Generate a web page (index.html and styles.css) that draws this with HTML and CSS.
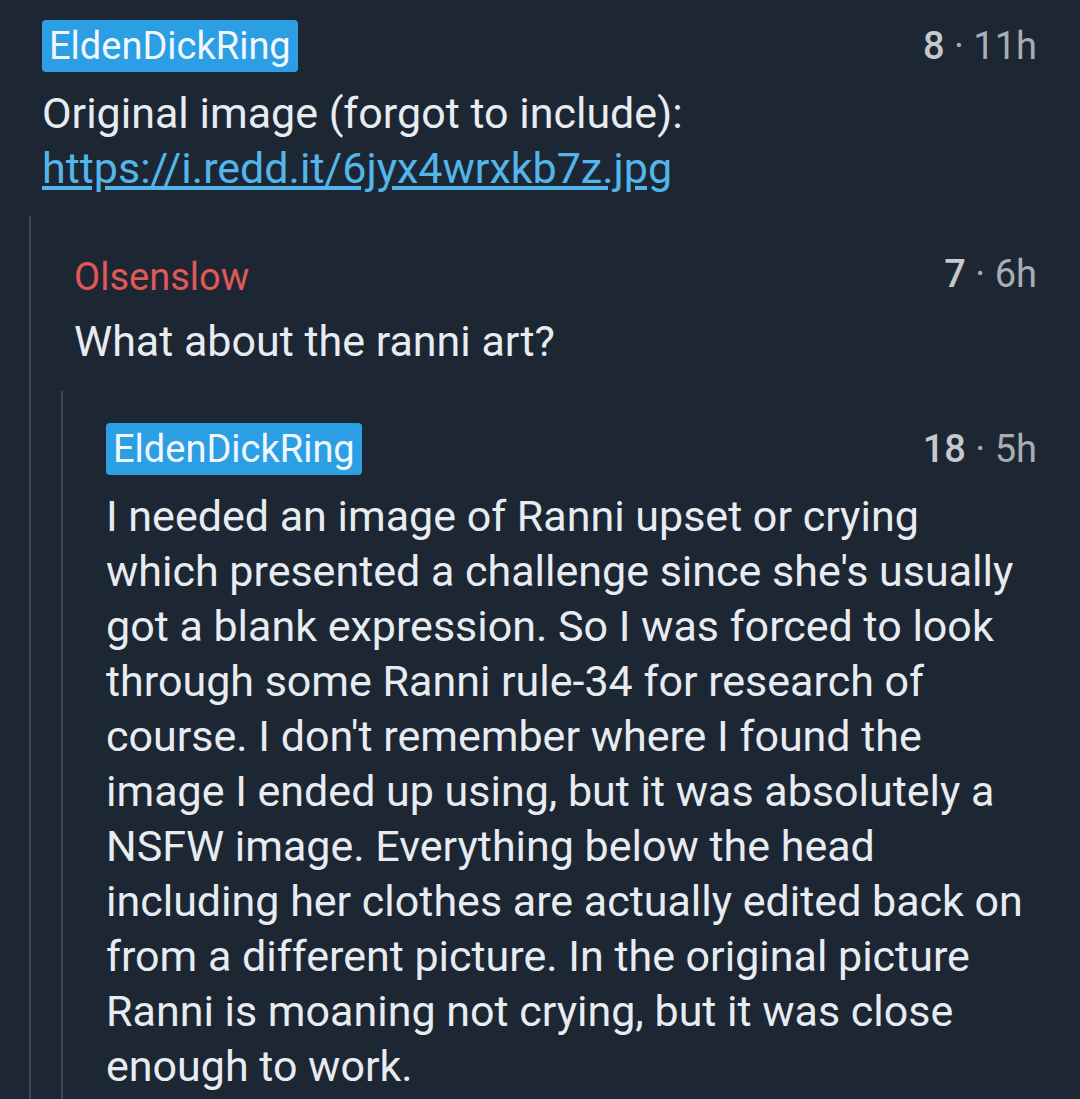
FILE: index.html
```html
<!DOCTYPE html>
<html>
<head>
  <meta charset="UTF-8">
  <title>Comments</title>
  <meta name="viewport" content="width=device-width, initial-scale=1.0">
  <link rel="stylesheet" href="styles.css">
</head>
<body>
  <div class="thread">
    <div class="comment">
      <div class="head">
        <span class="author op">EldenDickRing</span>
        <span class="meta"><b>8</b> · 11h</span>
      </div>
      <p class="body">Original image (forgot to include):<br><a href="#">https://i.redd.it/6jyx4wrxkb7z.jpg</a></p>

      <div class="replies">
        <div class="comment">
          <div class="head">
            <span class="author red">Olsenslow</span>
            <span class="meta"><b>7</b> · 6h</span>
          </div>
          <p class="body">What about the ranni art?</p>

          <div class="replies">
            <div class="comment">
              <div class="head">
                <span class="author op">EldenDickRing</span>
                <span class="meta"><b>18</b> · 5h</span>
              </div>
              <p class="body">I needed an image of Ranni upset or crying which presented a challenge since she's usually got a blank expression. So I was forced to look through some Ranni rule-34 for research of course. I don't remember where I found the image I ended up using, but it was absolutely a NSFW image. Everything below the head including her clothes are actually edited back on from a different picture. In the original picture Ranni is moaning not crying, but it was close enough to work.</p>
            </div>
          </div>
        </div>
      </div>
    </div>
  </div>
</body>
</html>
```

FILE: styles.css
```css
html, body { margin: 0; background: #1d2734; }
body { font-family: Roboto, "Noto Sans", sans-serif; color: #e8ecf1; }

.thread { padding: 20px 43px 0 42px; }

.head { display: flex; justify-content: space-between; align-items: center; height: 52px; }
.author { font-size: 38px; line-height: 52px; }
.author.op { background: #2c9ee4; color: #f0f8ff; padding: 0 7px; border-radius: 4px; }
.author.red { color: #e05858; padding-top: 6px; }

.meta { font-size: 38px; color: #a9aeb4; }
.meta b { font-weight: 500; color: #c5c8cc; }

.body { margin: 14px 0 0; font-size: 43px; line-height: 55px; }
.body a { color: #54b5ea; }

.replies {
  margin: 20px 0 0 -13px;
  border-left: 2px solid #394654;
  padding: 32px 0 0 43px;
}
.replies .replies { margin-top: 22px; padding-bottom: 6px; }
```
